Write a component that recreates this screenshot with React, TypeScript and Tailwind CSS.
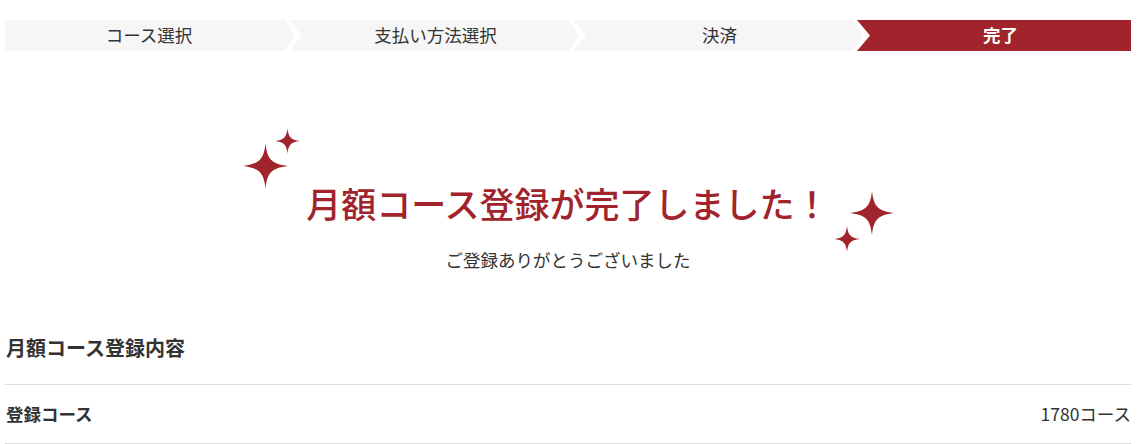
import React from "react";

const steps = ["コース選択", "支払い方法選択", "決済", "完了"];

const Sparkle: React.FC<{ className?: string }> = ({ className }) => (
  <svg viewBox="0 0 100 100" className={className} aria-hidden>
    <path
      d="M50 0 C54 34 62 45 100 50 C62 55 54 66 50 100 C46 66 38 55 0 50 C38 45 46 34 50 0Z"
      fill="#a1232b"
    />
  </svg>
);

// arrow tip depth 10px, notch depth 13px, neighbours overlap by 6px
const clipFor = (first: boolean, last: boolean) =>
  first
    ? "polygon(0 0, calc(100% - 10px) 0, 100% 50%, calc(100% - 10px) 100%, 0 100%)"
    : last
      ? "polygon(0 0, 100% 0, 100% 100%, 0 100%, 13px 50%)"
      : "polygon(0 0, calc(100% - 10px) 0, 100% 50%, calc(100% - 10px) 100%, 0 100%, 13px 50%)";

const StepBar: React.FC<{ current: number }> = ({ current }) => (
  <div className="flex h-[31px]">
    {steps.map((label, i) => {
      const active = i === current;
      const first = i === 0;
      const last = i === steps.length - 1;
      return (
        <div
          key={label}
          style={{ clipPath: clipFor(first, last) }}
          className={
            "flex items-center justify-center text-[17.5px] " +
            (last ? "flex-1 pl-[13px] " : "w-[290px] shrink-0 pr-[10px] ") +
            (first ? "pl-[8px] " : "-ml-[6px] pl-[13px] ") +
            (active ? "bg-[#a1232b] text-white font-bold" : "bg-[#f6f6f6] text-[#333]")
          }
        >
          {label}
        </div>
      );
    })}
  </div>
);

export default function App() {
  return (
    <div
      className="bg-white min-h-[444px] pl-[5px] pr-[12px] pt-[20px] text-[#333]"
      style={{ fontFamily: '"Noto Sans CJK JP", "Noto Sans", sans-serif' }}
    >
      <StepBar current={3} />

      <div className="mt-[131px] flex flex-col items-center">
        <h1 className="relative text-[35px] leading-[41px] font-medium text-[#a1232b]">
          <Sparkle className="absolute -left-[63px] -top-[39px] w-[45px] h-[46px]" />
          <Sparkle className="absolute -left-[31px] -top-[54px] w-[25px] h-[26px]" />
          月額コース登録が完了しました！
          <Sparkle className="absolute left-[calc(100%+20px)] top-[8px] w-[44px] h-[46px]" />
          <Sparkle className="absolute left-[calc(100%+4px)] top-[44px] w-[26px] h-[26px]" />
        </h1>
        <p className="mt-[25px] text-[17.5px] leading-[24px]">ご登録ありがとうございました</p>
      </div>

      <h2 className="mt-[62px] text-[20px] leading-[28px] font-bold pl-px">月額コース登録内容</h2>
      <div className="mt-[22px] border-t border-b border-[#dddddd] flex items-center justify-between h-[60px] text-[17.5px]">
        <span className="font-bold pl-px">登録コース</span>
        <span>1780コース</span>
      </div>
    </div>
  );
}
